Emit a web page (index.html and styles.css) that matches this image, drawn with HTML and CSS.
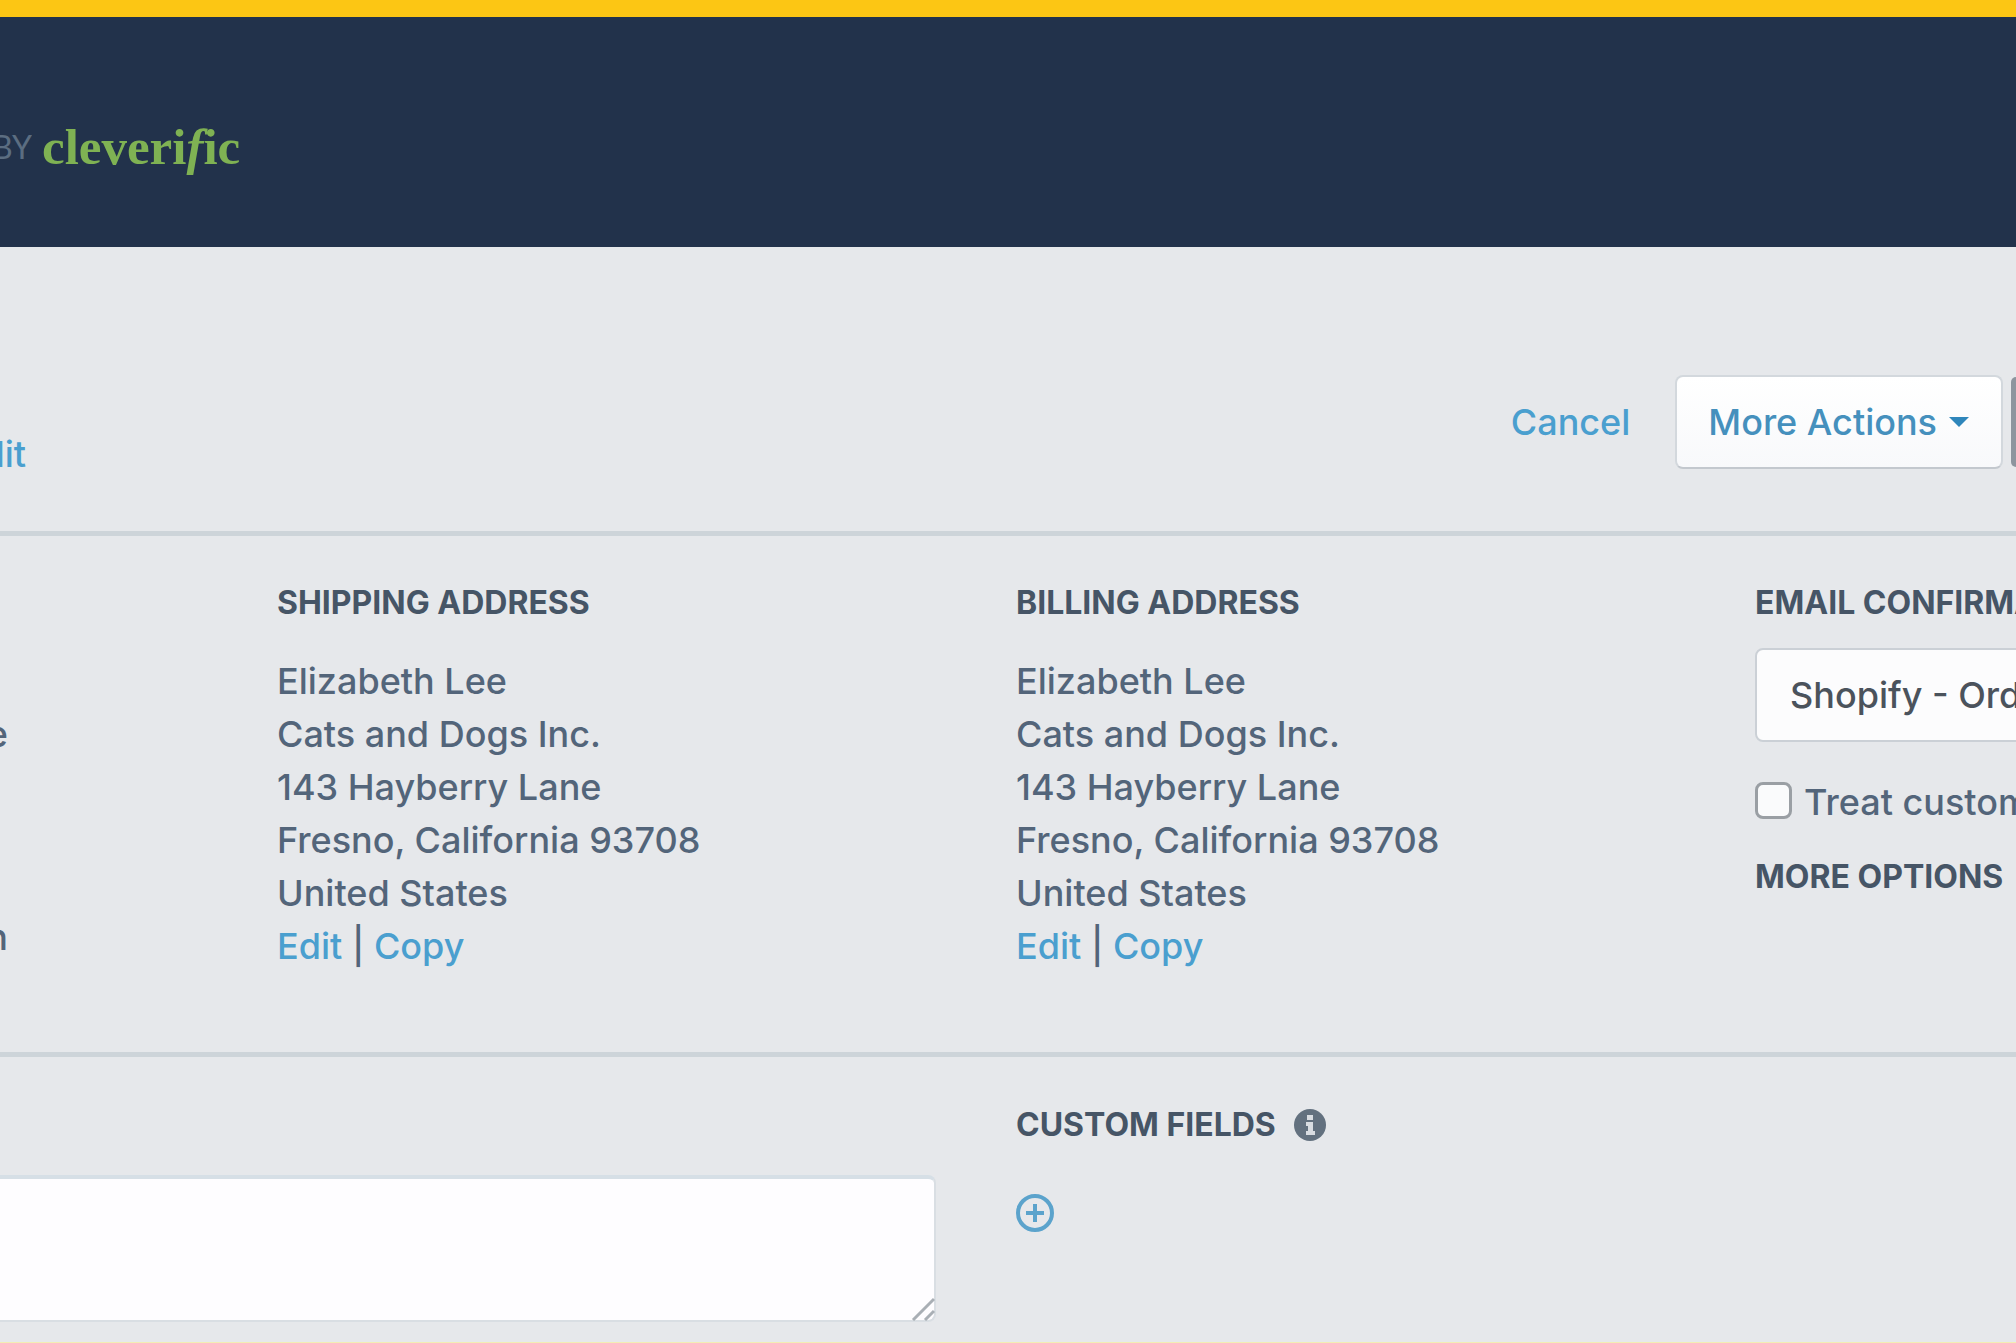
FILE: index.html
```html
<!DOCTYPE html>
<html lang="en">
<head>
<meta charset="utf-8">
<title>Order editor</title>
<link rel="stylesheet" href="styles.css">
</head>
<body>
<header class="banner">
  <span class="by"><span>BY</span></span>
  <a class="brand" href="#">cleveri<em>f</em>ic</a>
</header>
<main>
  <section class="toolbar">
    <a class="clip title-edit" href="#">Edit</a>
    <div class="actions">
      <a href="#">Cancel</a>
      <button class="more" type="button">More Actions
        <svg class="caret" viewBox="0 0 20 10" aria-hidden="true"><path d="M0 0h20L10 10z"/></svg>
      </button>
      <button class="save" type="button" aria-label="Save"></button>
    </div>
  </section>
  <section class="grid details">
    <div class="customer">
      <span class="clip">e</span>
      <span class="clip">n</span>
    </div>
    <div>
      <h2>SHIPPING ADDRESS</h2>
      <address>Elizabeth Lee<br>Cats and Dogs Inc.<br>143 Hayberry Lane<br>Fresno, California 93708<br>United States<br><a href="#">Edit</a> | <a href="#">Copy</a></address>
    </div>
    <div>
      <h2>BILLING ADDRESS</h2>
      <address>Elizabeth Lee<br>Cats and Dogs Inc.<br>143 Hayberry Lane<br>Fresno, California 93708<br>United States<br><a href="#">Edit</a> | <a href="#">Copy</a></address>
    </div>
    <div class="email">
      <h2><label for="template">EMAIL CONFIRMA</label></h2>
      <select id="template"><option>Shopify - Ord</option></select>
      <div class="check"><input id="treat" type="checkbox"><label for="treat">Treat custom</label></div>
      <h2>MORE OPTIONS</h2>
    </div>
  </section>
  <section class="grid extras">
    <div class="note">
      <textarea aria-label="Note"></textarea>
      <svg class="grip" viewBox="0 0 24 24" aria-hidden="true"><path d="M2 23L23 2M14 23l9-9"/></svg>
    </div>
    <div class="fields">
      <h2>CUSTOM FIELDS
        <svg class="info" viewBox="0 0 32 32" aria-hidden="true"><circle cx="16" cy="16" r="16"/><path d="M13 6h6v5h-6zM12 13h7v9h2v4H12v-4h2v-5h-2z"/></svg>
      </h2>
      <button class="add" type="button" aria-label="Add custom field">
        <svg viewBox="0 0 38 38" aria-hidden="true"><circle cx="19" cy="19" r="17"/><path d="M19 10v18M10 19h18"/></svg>
      </button>
    </div>
  </section>
</main>
</body>
</html>
```
FILE: styles.css
```css
* { box-sizing: border-box; }
body {
  margin: 0;
  overflow-x: hidden;
  background: #e6e8eb;
  border-bottom: 1px solid #f3edb4;
  color: #53657a;
  font: 500 36px/53px Inter, "Liberation Sans", sans-serif;
}
a { color: #4a9fcf; text-decoration: none; }
h2 {
  margin: 0;
  color: #465566;
  font-size: 32px;
  font-weight: 700;
  line-height: 40px;
  white-space: nowrap;
}
.banner {
  display: flex;
  align-items: center;
  gap: 10px;
  height: 247px;
  padding-top: 30px;
  border-top: 17px solid #fcc614;
  background: #22324b;
}
.by {
  display: flex;
  justify-content: flex-end;
  width: 32px;
  overflow: hidden;
  color: #5b6d81;
  font: 32px/40px Lato, sans-serif;
}
.brand {
  color: #7fb253;
  font: bold 51px/60px "Liberation Serif", serif;
}
.clip {
  display: flex;
  justify-content: flex-end;
  width: 8px;
  overflow: hidden;
}
.toolbar {
  display: flex;
  justify-content: space-between;
  height: 289px;
  padding-top: 128px;
  border-bottom: 5px solid #cdd4d9;
}
.title-edit { width: 26px; margin-top: 53px; }
.actions {
  display: flex;
  align-items: center;
  height: 94px;
}
.more {
  display: flex;
  align-items: center;
  gap: 12px;
  height: 94px;
  margin: 0 8px 0 45px;
  padding: 0 32px 0 31px;
  border: 2px solid #d3d8dd;
  border-bottom-color: #c3c8ce;
  border-radius: 8px;
  background: linear-gradient(#fff, #f8f9fb);
  color: #4590bd;
  font: inherit;
  white-space: nowrap;
}
.caret { width: 20px; height: 10px; fill: #2f86bb; }
.save {
  width: 5px;
  height: 90px;
  padding: 0;
  border: 0;
  border-radius: 5px 0 0 5px;
  background: #8d959e;
}
.grid {
  display: grid;
  grid-template-columns: minmax(0, 277fr) minmax(0, 739fr) minmax(0, 739fr) minmax(0, 261fr);
}
.details {
  height: 521px;
  padding-top: 47px;
  border-bottom: 5px solid #cdd4d9;
}
address { margin-top: 32px; font-style: normal; }
.customer {
  display: flex;
  flex-direction: column;
  gap: 150px;
  padding-top: 125px;
}
.email { overflow: hidden; }
select {
  display: block;
  width: 520px;
  height: 94px;
  margin: 25px 0 34px;
  padding: 0 33px;
  appearance: none;
  border: 2px solid #cbd0d6;
  border-radius: 8px;
  background: #fcfcfd;
  color: #4b535c;
  font: inherit;
}
.check {
  display: flex;
  align-items: center;
  gap: 12px;
  margin-bottom: 28px;
  white-space: nowrap;
}
.check input {
  flex: none;
  width: 37px;
  height: 37px;
  margin: 0 0 4px;
  appearance: none;
  border: 3px solid #9a9fa4;
  border-radius: 8px;
  background: #fafbfc;
}
.extras { height: 285px; }
.note {
  position: relative;
  grid-column: span 2;
  margin: 118px 80px 20px 0;
}
textarea {
  display: block;
  width: 100%;
  height: 147px;
  resize: none;
  border: 2px solid #d9dee3;
  border-left: 0;
  border-top: 4px solid #d6dfe6;
  border-radius: 0 8px 8px 0;
  background: #fefdff;
}
.grip {
  position: absolute;
  right: 1px;
  bottom: 1px;
  width: 24px;
  height: 24px;
  fill: none;
  stroke: #a9afb5;
  stroke-width: 3;
}
.fields { padding-top: 48px; }
.fields h2 { display: flex; align-items: center; gap: 18px; }
.info { width: 32px; height: 32px; fill: #63717f; }
.info path { fill: #d9dde2; }
.add {
  display: block;
  width: 38px;
  height: 38px;
  margin-top: 49px;
  padding: 0;
  border: 0;
  background: none;
}
.add svg {
  display: block;
  fill: none;
  stroke: #5ba3cc;
  stroke-width: 4;
}
```
